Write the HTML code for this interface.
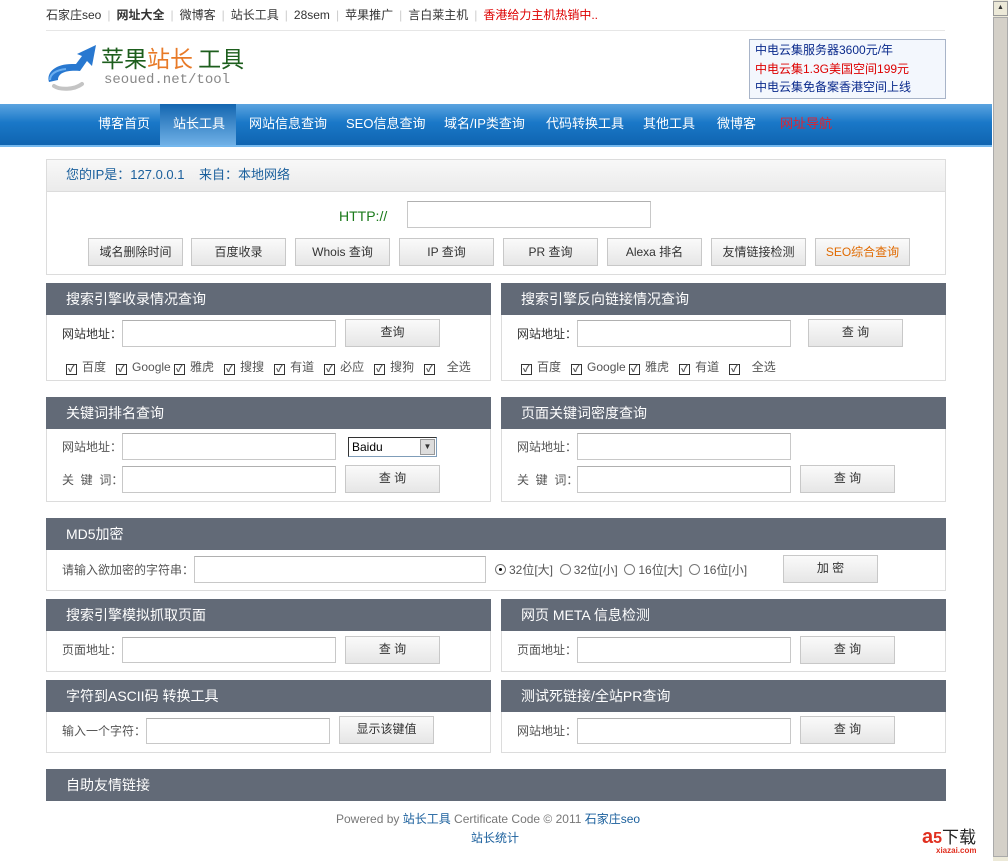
<!DOCTYPE html>
<html><head><meta charset="utf-8"><style>
*{margin:0;padding:0;box-sizing:border-box}
body{width:1008px;height:861px;overflow:hidden;background:#fff;position:relative;font-family:"Liberation Sans","Noto Sans CJK SC",sans-serif;font-size:12px;color:#333}
.a{position:absolute;white-space:nowrap;line-height:16px}
.box{position:absolute;border:1px solid #dcdcdc;background:#fff}
.hd{position:absolute;background:#626a77;color:#fff;font-size:14px;line-height:32px;padding-left:20px;height:32px}
.in{position:absolute;border:1px solid #c8c8c8;background:#fff;border-top-color:#b0b0b0}
.bt{position:absolute;border:1px solid #c8c8c8;background:linear-gradient(#fafafa,#e6e6e6);text-align:center;color:#333;font-size:12px}
.cb{display:inline-block;width:11px;height:11px;border:1px solid #333;vertical-align:-1px;margin-right:5px;font-size:10px;line-height:9px;text-align:center;font-weight:bold}
.rd{display:inline-block;width:11px;height:11px;border:1px solid #777;border-radius:50%;vertical-align:-1px;margin-right:3px;position:relative}
.sep{color:#ccc;margin:0 6px}
.nav span{position:absolute;top:116px;color:#fff;font-size:13px;line-height:16px}
.lbl{color:#555}
</style></head><body>

<div class="a" style="left:46px;top:7px;font-size:12px">石家庄seo<span class="sep">|</span><b>网址大全</b><span class="sep">|</span>微博客<span class="sep">|</span>站长工具<span class="sep">|</span>28sem<span class="sep">|</span>苹果推广<span class="sep">|</span>言白莱主机<span class="sep">|</span><span style="color:#d00">香港给力主机热销中..</span></div>
<div style="position:absolute;left:46px;top:30px;width:899px;height:1px;background:#e6e6e6"></div>

<svg style="position:absolute;left:46px;top:42px" width="54" height="50" viewBox="0 0 54 50">
<path d="M8 44 C14 48 28 48 36 42" stroke="#c4c4c4" stroke-width="4" fill="none" stroke-linecap="round"/>
<path d="M3 40 C0 30 10 22 26 22 L30 22 L36 14 L31 12 L50 3 L46 24 L41 19 L34 29 C22 28 12 30 12 38 Z" fill="#2878d0"/>
<path d="M4 38 C4 32 10 28 20 27" stroke="#6aaef0" stroke-width="2" fill="none"/>
</svg>
<div class="a" style="left:101px;top:43px;font-size:23px;line-height:28px;color:#1d5e1d;font-family:'Noto Sans CJK SC',sans-serif">苹果<span style="color:#e87a27">站长</span> 工具</div>
<div class="a" style="left:104px;top:72px;font-size:14px;color:#888;font-family:'Liberation Mono',monospace">seoued.net/tool</div>

<div style="position:absolute;left:749px;top:39px;width:197px;height:60px;border:1px solid #a8b4c8;background:#f3f7fd"></div>
<div class="a" style="left:755px;top:42px;color:#0a2a8c">中电云集服务器3600元/年</div>
<div class="a" style="left:755px;top:61px;color:#d00">中电云集1.3G美国空间199元</div>
<div class="a" style="left:755px;top:79px;color:#0a2a8c">中电云集免备案香港空间上线</div>

<div style="position:absolute;left:0;top:104px;width:992px;height:43px;background:linear-gradient(#5ba4e0,#1a78c8 45%,#0f64b0);border-bottom:2px solid #74b8ee"></div>
<div style="position:absolute;left:160px;top:104px;width:76px;height:41px;background:linear-gradient(#1466b0,#6fb0e6)"></div>
<div class="nav">
<span style="left:98px">博客首页</span><span style="left:173px">站长工具</span><span style="left:249px">网站信息查询</span><span style="left:346px">SEO信息查询</span><span style="left:444px">域名/IP类查询</span><span style="left:546px">代码转换工具</span><span style="left:643px">其他工具</span><span style="left:717px">微博客</span><span style="left:780px;color:#e0232f">网址导航</span>
</div>

<div class="box" style="left:46px;top:159px;width:900px;height:116px"></div>
<div style="position:absolute;left:47px;top:160px;width:898px;height:32px;background:linear-gradient(#f8f8f8,#ebebeb);border-bottom:1px solid #dcdcdc"></div>
<div class="a" style="left:66px;top:167px;font-size:13px;color:#1a5f9c">您的IP是：127.0.0.1&nbsp;&nbsp;&nbsp; 来自：本地网络</div>
<div class="a" style="left:339px;top:208px;font-size:14px;color:#1a7a1a">HTTP://</div>
<div class="in" style="left:407px;top:201px;width:244px;height:27px"></div>
<div class="bt" style="left:88px;top:238px;width:95px;height:28px;line-height:26px">域名删除时间</div>
<div class="bt" style="left:191px;top:238px;width:95px;height:28px;line-height:26px">百度收录</div>
<div class="bt" style="left:295px;top:238px;width:95px;height:28px;line-height:26px">Whois 查询</div>
<div class="bt" style="left:399px;top:238px;width:95px;height:28px;line-height:26px">IP 查询</div>
<div class="bt" style="left:503px;top:238px;width:95px;height:28px;line-height:26px">PR 查询</div>
<div class="bt" style="left:607px;top:238px;width:95px;height:28px;line-height:26px">Alexa 排名</div>
<div class="bt" style="left:711px;top:238px;width:95px;height:28px;line-height:26px">友情链接检测</div>
<div class="bt" style="left:815px;top:238px;width:95px;height:28px;line-height:26px;color:#e06a00">SEO综合查询</div>

<div class="box" style="left:46px;top:283px;width:445px;height:98px"></div>
<div class="hd" style="left:46px;top:283px;width:445px">搜索引擎收录情况查询</div>
<div class="a" style="left:62px;top:326px">网站地址：</div>
<div class="in" style="left:122px;top:320px;width:214px;height:27px"></div>
<div class="bt" style="left:345px;top:319px;width:95px;height:28px;line-height:24px">查询</div>
<div class="a lbl" style="left:66px;top:359px"><span class="cb">✓</span>百度 &nbsp; <span class="cb">✓</span>Google <span class="cb">✓</span>雅虎 &nbsp; <span class="cb">✓</span>搜搜 &nbsp; <span class="cb">✓</span>有道 &nbsp; <span class="cb">✓</span>必应 &nbsp; <span class="cb">✓</span>搜狗 &nbsp; <span class="cb">✓</span>&nbsp; 全选</div>

<div class="box" style="left:501px;top:283px;width:445px;height:98px"></div>
<div class="hd" style="left:501px;top:283px;width:445px">搜索引擎反向链接情况查询</div>
<div class="a" style="left:517px;top:326px">网站地址：</div>
<div class="in" style="left:577px;top:320px;width:214px;height:27px"></div>
<div class="bt" style="left:808px;top:319px;width:95px;height:28px;line-height:24px">查 询</div>
<div class="a lbl" style="left:521px;top:359px"><span class="cb">✓</span>百度 &nbsp; <span class="cb">✓</span>Google <span class="cb">✓</span>雅虎 &nbsp; <span class="cb">✓</span>有道 &nbsp; <span class="cb">✓</span>&nbsp; 全选</div>

<div class="box" style="left:46px;top:397px;width:445px;height:105px"></div>
<div class="hd" style="left:46px;top:397px;width:445px">关键词排名查询</div>
<div class="a lbl" style="left:62px;top:439px">网站地址：</div>
<div class="in" style="left:122px;top:433px;width:214px;height:27px"></div>
<div style="position:absolute;left:348px;top:437px;width:89px;height:20px;border:1px solid #7f9db9;border-left-color:#333;border-top-color:#333;background:#fff"><span class="a" style="left:3px;top:1px;color:#000">Baidu</span><div style="position:absolute;right:1px;top:1px;width:15px;height:16px;background:#ddd;border:1px solid #999;font-size:8px;text-align:center;line-height:14px">▼</div></div>
<div class="a lbl" style="left:62px;top:472px">关&nbsp; 键&nbsp; 词：</div>
<div class="in" style="left:122px;top:466px;width:214px;height:27px"></div>
<div class="bt" style="left:345px;top:465px;width:95px;height:28px;line-height:24px">查 询</div>

<div class="box" style="left:501px;top:397px;width:445px;height:105px"></div>
<div class="hd" style="left:501px;top:397px;width:445px">页面关键词密度查询</div>
<div class="a lbl" style="left:517px;top:439px">网站地址：</div>
<div class="in" style="left:577px;top:433px;width:214px;height:27px"></div>
<div class="a lbl" style="left:517px;top:472px">关&nbsp; 键&nbsp; 词：</div>
<div class="in" style="left:577px;top:466px;width:214px;height:27px"></div>
<div class="bt" style="left:800px;top:465px;width:95px;height:28px;line-height:24px">查 询</div>

<div class="box" style="left:46px;top:518px;width:900px;height:73px"></div>
<div class="hd" style="left:46px;top:518px;width:900px">MD5加密</div>
<div class="a lbl" style="left:62px;top:562px">请输入欲加密的字符串：</div>
<div class="in" style="left:194px;top:556px;width:292px;height:27px"></div>
<div class="a lbl" style="left:495px;top:562px"><span class="rd"><span style="position:absolute;left:3px;top:3px;width:3px;height:3px;background:#000;border-radius:50%"></span></span>32位[大] &nbsp;<span class="rd"></span>32位[小] &nbsp;<span class="rd"></span>16位[大] &nbsp;<span class="rd"></span>16位[小]</div>
<div class="bt" style="left:783px;top:555px;width:95px;height:28px;line-height:24px">加 密</div>

<div class="box" style="left:46px;top:599px;width:445px;height:73px"></div>
<div class="hd" style="left:46px;top:599px;width:445px">搜索引擎模拟抓取页面</div>
<div class="a lbl" style="left:62px;top:642px">页面地址：</div>
<div class="in" style="left:122px;top:637px;width:214px;height:26px"></div>
<div class="bt" style="left:345px;top:636px;width:95px;height:28px;line-height:24px">查 询</div>

<div class="box" style="left:501px;top:599px;width:445px;height:73px"></div>
<div class="hd" style="left:501px;top:599px;width:445px">网页 META 信息检测</div>
<div class="a lbl" style="left:517px;top:642px">页面地址：</div>
<div class="in" style="left:577px;top:637px;width:214px;height:26px"></div>
<div class="bt" style="left:800px;top:636px;width:95px;height:28px;line-height:24px">查 询</div>

<div class="box" style="left:46px;top:680px;width:445px;height:73px"></div>
<div class="hd" style="left:46px;top:680px;width:445px">字符到ASCII码 转换工具</div>
<div class="a lbl" style="left:62px;top:723px">输入一个字符：</div>
<div class="in" style="left:146px;top:718px;width:184px;height:26px"></div>
<div class="bt" style="left:339px;top:716px;width:95px;height:28px;line-height:24px">显示该键值</div>

<div class="box" style="left:501px;top:680px;width:445px;height:73px"></div>
<div class="hd" style="left:501px;top:680px;width:445px">测试死链接/全站PR查询</div>
<div class="a lbl" style="left:517px;top:723px">网站地址：</div>
<div class="in" style="left:577px;top:718px;width:214px;height:26px"></div>
<div class="bt" style="left:800px;top:716px;width:95px;height:28px;line-height:24px">查 询</div>

<div class="hd" style="left:46px;top:769px;width:900px">自助友情链接</div>

<div class="a" style="left:336px;top:811px;color:#777">Powered by <span style="color:#1a5f9c">站长工具</span> Certificate Code © 2011 <span style="color:#1a5f9c">石家庄seo</span></div>
<div class="a" style="left:471px;top:830px;color:#1a5f9c">站长统计</div>

<div class="a" style="left:922px;top:826px;font-size:20px;line-height:22px;color:#e03020;font-weight:bold">a<span style="font-size:16px">5</span><span style="color:#222;font-weight:normal;font-size:17px">下载</span></div>
<div class="a" style="left:936px;top:846px;font-size:8px;line-height:10px;color:#e03020;font-weight:bold">xiazai.com</div>

<div style="position:absolute;left:992px;top:0;width:16px;height:861px;background:#ece9d8;border-left:1px solid #fff"></div>
<div style="position:absolute;left:993px;top:1px;width:15px;height:15px;background:#ece9d8;border:1px solid #999;font-size:7px;text-align:center;line-height:12px">▲</div>
<div style="position:absolute;left:993px;top:17px;width:15px;height:840px;background:#d4d0c8;border:1px solid #aaa"></div>
</body></html>
